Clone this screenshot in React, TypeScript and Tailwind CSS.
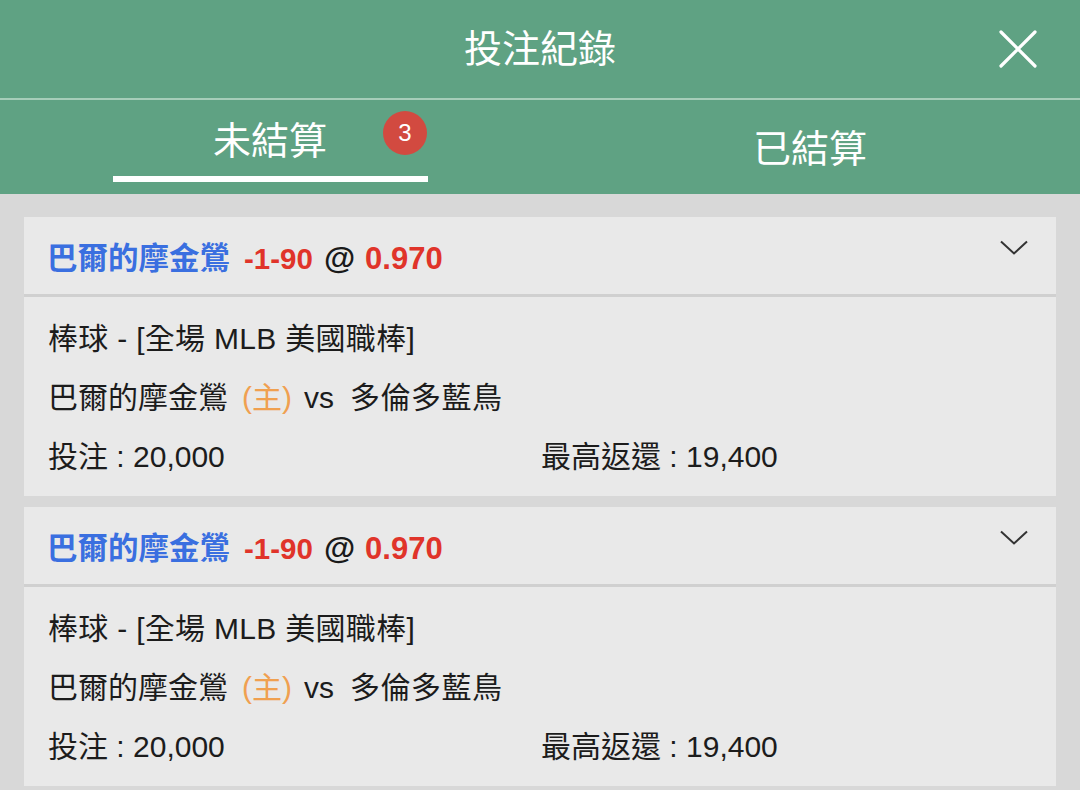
const font = { fontFamily: '"Liberation Sans", "Noto Sans CJK TC", sans-serif' };

interface Bet {
  team: string;
  line: string;
  odds: string;
  league: string;
  away: string;
  stake: string;
  maxReturn: string;
}

const bets: Bet[] = [
  {
    team: '巴爾的摩金鶯',
    line: '-1-90',
    odds: '0.970',
    league: '棒球 - [全場 MLB 美國職棒]',
    away: '多倫多藍鳥',
    stake: '20,000',
    maxReturn: '19,400',
  },
  {
    team: '巴爾的摩金鶯',
    line: '-1-90',
    odds: '0.970',
    league: '棒球 - [全場 MLB 美國職棒]',
    away: '多倫多藍鳥',
    stake: '20,000',
    maxReturn: '19,400',
  },
];

function BetCard({ bet }: { bet: Bet }) {
  return (
    <div className="bg-[#e9e9e9]">
      <div className="h-[77px] flex items-center justify-between pl-[23px] pr-[28px]">
        <div className="flex items-baseline font-bold leading-none pt-[4px]">
          <span className="text-[30.5px] text-[#3a6fe0]">{bet.team}</span>
          <span className="ml-[14px] text-[29.5px] text-[#e0342a]">{bet.line}</span>
          <span className="ml-[11px] text-[32px] text-[#1a1a1a]">@</span>
          <span className="ml-[10px] text-[31px] text-[#e0342a]">{bet.odds}</span>
        </div>
        <svg width="28" height="15" viewBox="0 0 28 15" fill="none" stroke="#333" strokeWidth="2" className="mb-[16px]">
          <path d="M1 1.5 L14 13.5 L27 1.5" />
        </svg>
      </div>
      <div className="h-[3px] bg-[#d0d0d0]" />
      <div className="pl-[24px] pt-[12px] pb-[10px] text-[30px] leading-[59px] text-[#1c1c1c]">
        <div className="tracking-[0.3px]">{bet.league}</div>
        <div className="flex items-baseline">
          <span>{bet.team}</span>
          <span className="ml-[14px] text-[#f0a050]">(主)</span>
          <span className="ml-[12px]">vs</span>
          <span className="ml-[16px] tracking-[0.5px]">{bet.away}</span>
        </div>
        <div className="flex">
          <span className="w-[493px]">投注 : {bet.stake}</span>
          <span>最高返還 : {bet.maxReturn}</span>
        </div>
      </div>
    </div>
  );
}

export default function App() {
  return (
    <div className="w-[1080px] h-[790px] overflow-hidden bg-[#d8d8d8]" style={font}>
      <div className="h-[98px] bg-[#5fa283] grid grid-cols-[1fr_auto_1fr] items-center">
        <div />
        <div className="text-white text-[38px] leading-none">投注紀錄</div>
        <div className="flex justify-end pr-[42px]">
          <svg width="40" height="40" viewBox="0 0 40 40" fill="none" stroke="white" strokeWidth="3.2" strokeLinecap="round">
            <path d="M3 3 L37 37 M37 3 L3 37" />
          </svg>
        </div>
      </div>
      <div className="h-[2px] bg-[#a6cdb9]" />
      <div className="h-[94px] bg-[#5fa283] flex">
        <div className="w-[540px] flex flex-col items-center pt-[22px]">
          <div className="relative text-white text-[38px] leading-none">
            未結算
            <span className="absolute left-[170px] top-[-11px] w-[44px] h-[44px] rounded-full bg-[#d24a40] text-white text-[24px] leading-none flex items-center justify-center">
              3
            </span>
          </div>
          <div className="mt-[16px] w-[315px] h-[6px] bg-white" />
        </div>
        <div className="w-[540px] flex justify-center pt-[30px]">
          <div className="text-white text-[38px] leading-none">已結算</div>
        </div>
      </div>
      <div className="px-[24px] pt-[23px] flex flex-col gap-[11px]">
        {bets.map((bet, i) => (
          <BetCard key={i} bet={bet} />
        ))}
      </div>
    </div>
  );
}
